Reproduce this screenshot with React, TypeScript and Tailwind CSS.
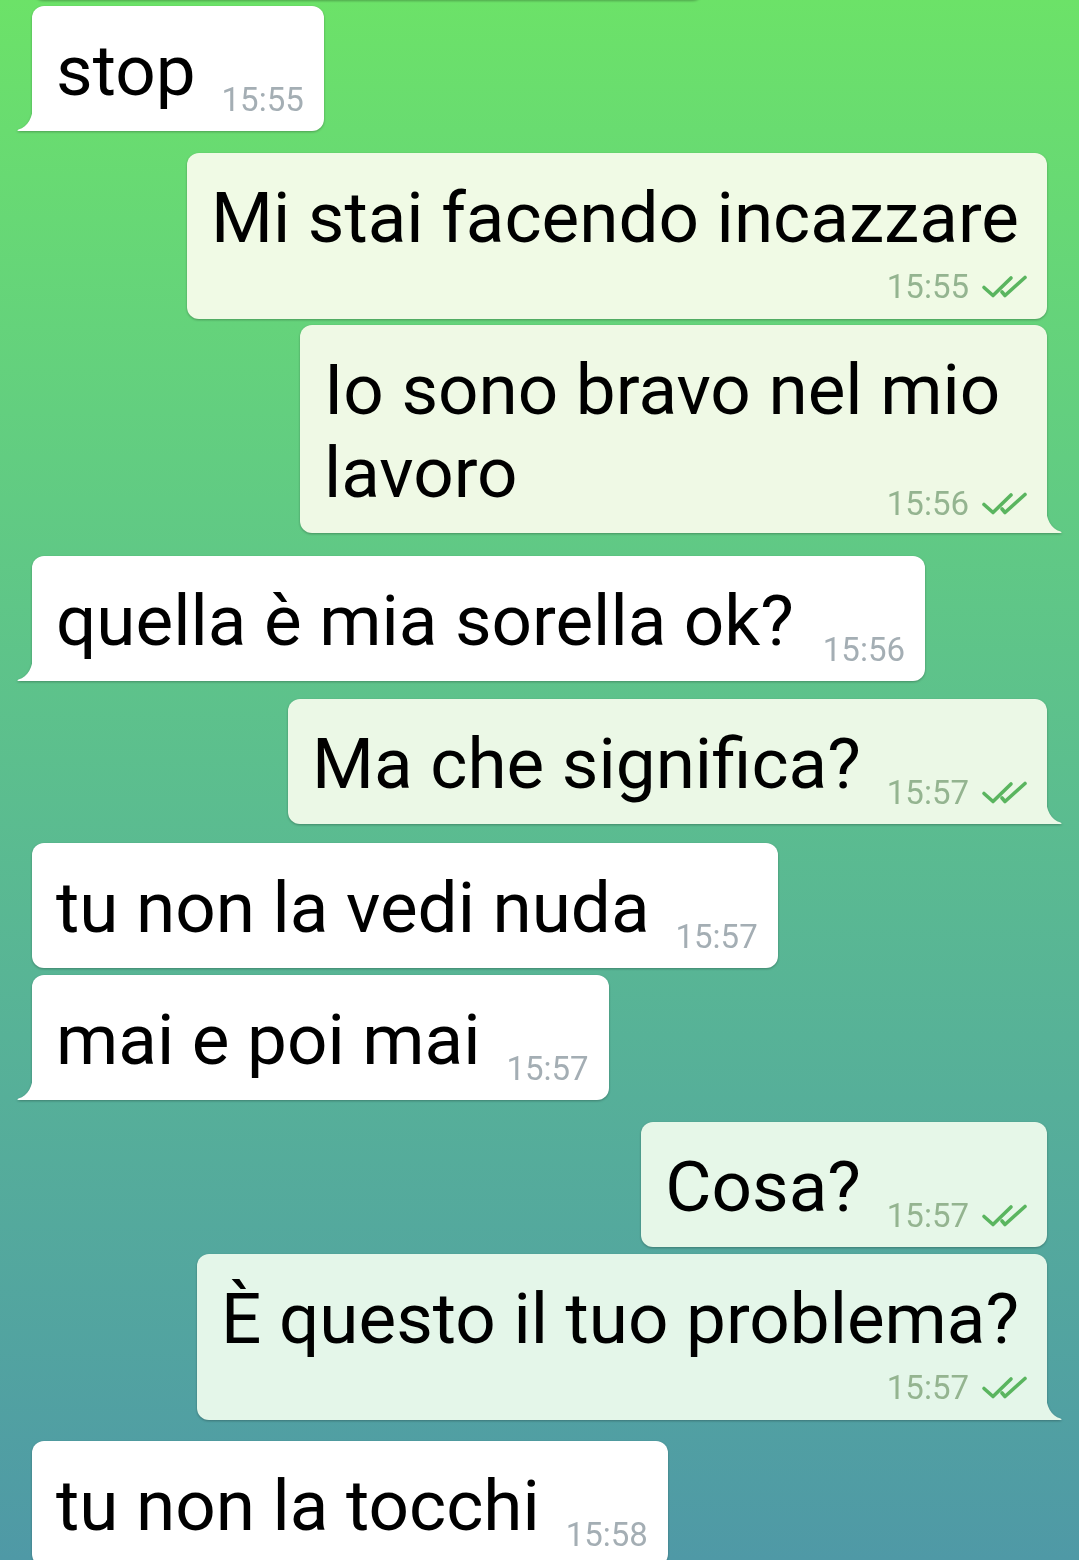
import React from "react";

type Msg = {
  text: string;
  time: string;
  out: boolean;
  mode: "inline" | "below" | "overlap";
  tail: boolean;
  mt: string;
  bg: string;
  fill: string;
  w?: string;
};

const messages: Msg[] = [
  { text: "stop", time: "15:55", out: false, mode: "inline", tail: true, mt: "mt-[6px]", bg: "bg-white", fill: "#ffffff" },
  { text: "Mi stai facendo incazzare", time: "15:55", out: true, mode: "below", tail: false, mt: "mt-[22px]", bg: "bg-[#f0fae5]", fill: "#f0fae5" },
  { text: "Io sono bravo nel mio lavoro", time: "15:56", out: true, mode: "overlap", tail: true, mt: "mt-[6px]", bg: "bg-[#eff9e5]", fill: "#eff9e5", w: "w-[747px]" },
  { text: "quella è mia sorella ok?", time: "15:56", out: false, mode: "inline", tail: true, mt: "mt-[23px]", bg: "bg-white", fill: "#ffffff", w: "w-[893px]" },
  { text: "Ma che significa?", time: "15:57", out: true, mode: "inline", tail: true, mt: "mt-[18px]", bg: "bg-[#ebf8e6]", fill: "#ebf8e6" },
  { text: "tu non la vedi nuda", time: "15:57", out: false, mode: "inline", tail: false, mt: "mt-[19px]", bg: "bg-white", fill: "#ffffff" },
  { text: "mai e poi mai", time: "15:57", out: false, mode: "inline", tail: true, mt: "mt-[7px]", bg: "bg-white", fill: "#ffffff" },
  { text: "Cosa?", time: "15:57", out: true, mode: "inline", tail: false, mt: "mt-[22px]", bg: "bg-[#e6f7e8]", fill: "#e6f7e8" },
  { text: "È questo il tuo problema?", time: "15:57", out: true, mode: "below", tail: true, mt: "mt-[7px]", bg: "bg-[#e4f6e9]", fill: "#e4f6e9" },
  { text: "tu non la tocchi", time: "15:58", out: false, mode: "inline", tail: false, mt: "mt-[21px]", bg: "bg-white", fill: "#ffffff" },
];

const Checks = () => (
  <svg width="46" height="24" viewBox="0 0 46 24" fill="none" stroke="#5ab55f" strokeWidth="3.6" strokeLinecap="round" strokeLinejoin="round">
    <path d="M3 12.5 L12 20.5 L30 3" />
    <path d="M21 17 L24 20.5 L44 2.5" />
  </svg>
);

const Time = ({ msg, className = "" }: { msg: Msg; className?: string }) => (
  <div className={`flex items-center gap-[12px] shrink-0 ${className}`}>
    <span className={`text-[33px] leading-[36px] ${msg.out ? "text-[#94b490]" : "text-[#a4aeb4]"}`}>{msg.time}</span>
    {msg.out && <Checks />}
  </div>
);

const Tail = ({ out, fill }: { out: boolean; fill: string }) => (
  <svg
    width="16"
    height="26"
    viewBox="0 0 16 26"
    className={`absolute bottom-0 ${out ? "-right-[15px]" : "-left-[15px] -scale-x-100"}`}
  >
    <path d="M0 0 C0 12 5 22 14.5 24.5 C16 25 16 26 14.5 26 L0 26 Z" fill={fill} />
  </svg>
);

const Bubble = ({ msg }: { msg: Msg }) => {
  const corner = msg.tail ? (msg.out ? "rounded-br-none" : "rounded-bl-none") : "";
  return (
    <div
      className={`relative max-w-[900px] rounded-[12px] drop-shadow-[0_1.5px_1px_rgba(0,0,0,0.28)] ${msg.bg} ${corner} ${msg.mt} ${
        msg.out ? "self-end" : "self-start"
      } ${msg.w ?? ""}`}
    >
      {msg.mode === "inline" && (
        <div className="flex items-end justify-between pl-[24px] pr-[20px] pt-[23px] pb-[19px]">
          <span className="text-[71px] leading-[83px] text-black whitespace-nowrap">{msg.text}</span>
          <Time msg={msg} className="ml-[26px] translate-y-[6px]" />
        </div>
      )}
      {msg.mode === "below" && (
        <div className="pl-[24px] pr-[20px] pt-[23px] pb-[14px]">
          <div className="pr-[8px] text-[71px] leading-[83px] text-black whitespace-nowrap">{msg.text}</div>
          <div className="flex justify-end mt-[10px]">
            <Time msg={msg} />
          </div>
        </div>
      )}
      {msg.mode === "overlap" && (
        <div className="pl-[24px] pr-[20px] pt-[23px] pb-[11px]">
          <div className="pr-[4px] text-[71px] leading-[83px] text-black">{msg.text}</div>
          <div className="flex justify-end -mt-[28px]">
            <Time msg={msg} />
          </div>
        </div>
      )}
      {msg.tail && <Tail out={msg.out} fill={msg.fill} />}
    </div>
  );
};

export default function App() {
  return (
    <div className="h-[1560px] w-[1079px] overflow-hidden bg-linear-to-b from-[#6ce268] to-[#4f99a6] font-[Roboto,sans-serif]">
      <div className="flex flex-col px-[32px]">
        <div className="-mt-[20px] h-[20px] w-[672px] self-start rounded-b-[12px] bg-white drop-shadow-[0_1.5px_1px_rgba(0,0,0,0.28)]" />
        {messages.map((m, i) => (
          <Bubble key={i} msg={m} />
        ))}
      </div>
    </div>
  );
}
